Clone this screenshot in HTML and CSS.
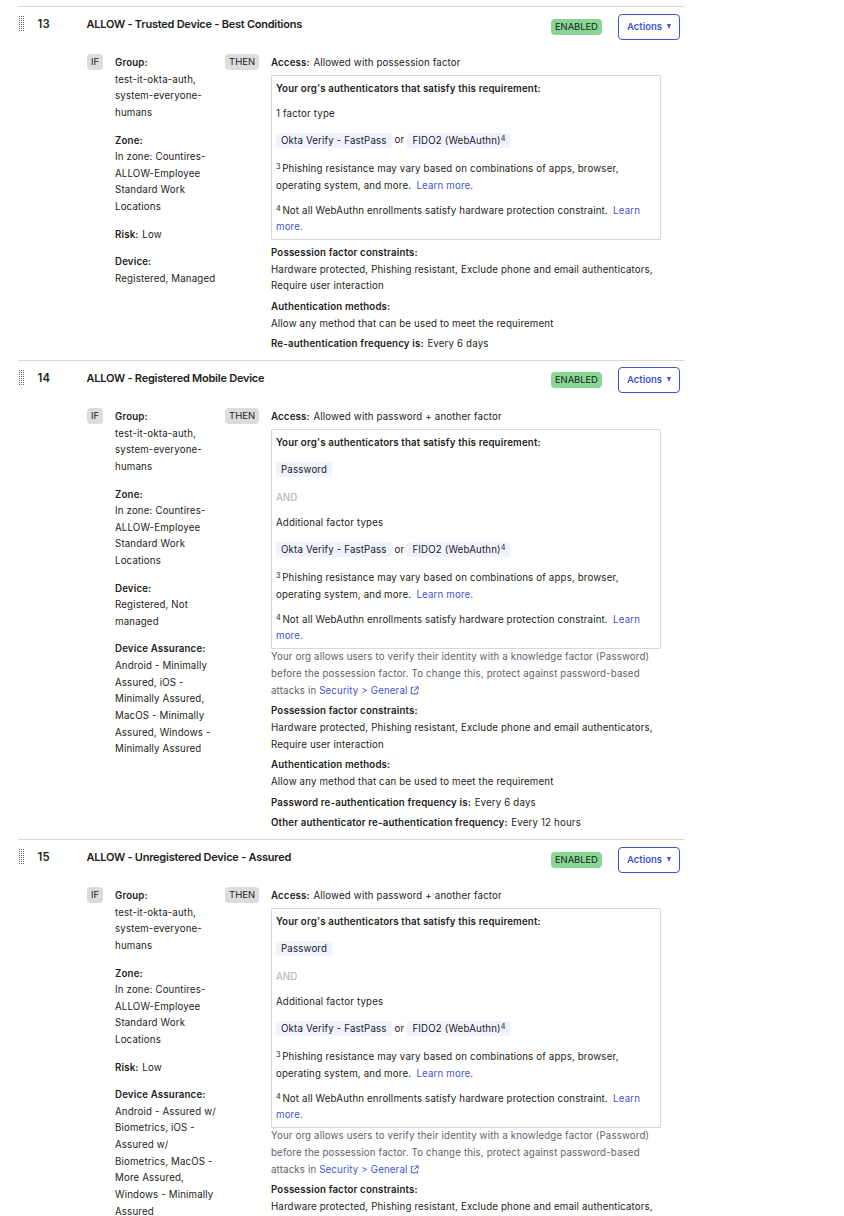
FILE: index.html
```
<!DOCTYPE html>
<html lang="en">
<head>
<meta charset="utf-8">
<title>Authentication policy rules</title>
<link rel="stylesheet" href="styles.css">
</head>
<body>
<svg class="defs" width="0" height="0">
  <symbol id="grip" viewBox="0 0 5 16"><path d="M.5 0V16M2.5 0V16M4.5 0V16" stroke="#6b6b70" stroke-width="1" stroke-dasharray="1 1" fill="none" shape-rendering="crispEdges"/></symbol>
  <symbol id="external" viewBox="0 0 10 10"><path d="M4 1.5H1.5V8.7H8.5V6M5.7 1H9V4.3M9 1L4.5 5.5" stroke="#3f55d0" stroke-width="1.1" fill="none"/></symbol>
</svg>
<main class="rules">
  <section class="rule first">
    <header class="head">
      <svg class="grip"><use href="#grip"/></svg>
      <span class="num">13</span>
      <h2 class="name">ALLOW - Trusted Device - Best Conditions</h2>
      <span class="status">ENABLED</span>
      <button class="actions">Actions <i class="caret"></i></button>
    </header>
    <div class="body">
      <div class="tag">IF</div>
      <div class="conditions">
        <p><b>Group:</b><br>test-it-okta-auth,<br>system-everyone-<br>humans</p>
        <p><b>Zone:</b><br>In zone: Countires-<br>ALLOW-Employee<br>Standard Work<br>Locations</p>
        <p><b>Risk:</b> Low</p>
        <p><b>Device:</b><br>Registered, Managed</p>
      </div>
      <div class="tag">THEN</div>
      <div class="outcome">
        <p><b>Access:</b> Allowed with possession factor</p>
        <div class="box">
          <p><b>Your org's authenticators that satisfy this requirement:</b></p>
          <p>1 factor type</p>
          <p class="chips"><span class="chip">Okta Verify - FastPass</span><span>or</span><span class="chip">FIDO2 (WebAuthn)<sup>4</sup></span></p>
          <p><sup>3</sup> Phishing resistance may vary based on combinations of apps, browser,<br>operating system, and more. <a>Learn more.</a></p>
          <p><sup>4</sup> Not all WebAuthn enrollments satisfy hardware protection constraint. <a>Learn<br>more.</a></p>
        </div>
        <p><b>Possession factor constraints:</b><br>Hardware protected, Phishing resistant, Exclude phone and email authenticators,<br>Require user interaction</p>
        <p><b>Authentication methods:</b><br>Allow any method that can be used to meet the requirement</p>
        <p><b>Re-authentication frequency is:</b> Every 6 days</p>
      </div>
    </div>
  </section>
  <section class="rule second">
    <header class="head">
      <svg class="grip"><use href="#grip"/></svg>
      <span class="num">14</span>
      <h2 class="name">ALLOW - Registered Mobile Device</h2>
      <span class="status">ENABLED</span>
      <button class="actions">Actions <i class="caret"></i></button>
    </header>
    <div class="body">
      <div class="tag">IF</div>
      <div class="conditions">
        <p><b>Group:</b><br>test-it-okta-auth,<br>system-everyone-<br>humans</p>
        <p><b>Zone:</b><br>In zone: Countires-<br>ALLOW-Employee<br>Standard Work<br>Locations</p>
        <p><b>Device:</b><br>Registered, Not<br>managed</p>
        <p><b>Device Assurance:</b><br>Android - Minimally<br>Assured, iOS -<br>Minimally Assured,<br>MacOS - Minimally<br>Assured, Windows -<br>Minimally Assured</p>
      </div>
      <div class="tag">THEN</div>
      <div class="outcome">
        <p><b>Access:</b> Allowed with password + another factor</p>
        <div class="box long">
          <p><b>Your org's authenticators that satisfy this requirement:</b></p>
          <p class="chips"><span class="chip">Password</span></p>
          <p class="and">AND</p>
          <p>Additional factor types</p>
          <p class="chips"><span class="chip">Okta Verify - FastPass</span><span>or</span><span class="chip">FIDO2 (WebAuthn)<sup>4</sup></span></p>
          <p><sup>3</sup> Phishing resistance may vary based on combinations of apps, browser,<br>operating system, and more. <a>Learn more.</a></p>
          <p><sup>4</sup> Not all WebAuthn enrollments satisfy hardware protection constraint. <a>Learn<br>more.</a></p>
        </div>
        <p class="hint">Your org allows users to verify their identity with a knowledge factor (Password)<br>before the possession factor. To change this, protect against password-based<br>attacks in <a class="tight">Security &gt; General <svg class="ext"><use href="#external"/></svg></a></p>
        <p><b>Possession factor constraints:</b><br>Hardware protected, Phishing resistant, Exclude phone and email authenticators,<br>Require user interaction</p>
        <p><b>Authentication methods:</b><br>Allow any method that can be used to meet the requirement</p>
        <p><b>Password re-authentication frequency is:</b> Every 6 days</p>
        <p><b>Other authenticator re-authentication frequency:</b> Every 12 hours</p>
      </div>
    </div>
  </section>
  <section class="rule">
    <header class="head">
      <svg class="grip"><use href="#grip"/></svg>
      <span class="num">15</span>
      <h2 class="name">ALLOW - Unregistered Device - Assured</h2>
      <span class="status">ENABLED</span>
      <button class="actions">Actions <i class="caret"></i></button>
    </header>
    <div class="body">
      <div class="tag">IF</div>
      <div class="conditions">
        <p><b>Group:</b><br>test-it-okta-auth,<br>system-everyone-<br>humans</p>
        <p><b>Zone:</b><br>In zone: Countires-<br>ALLOW-Employee<br>Standard Work<br>Locations</p>
        <p><b>Risk:</b> Low</p>
        <p><b>Device Assurance:</b><br>Android - Assured w/<br>Biometrics, iOS -<br>Assured w/<br>Biometrics, MacOS -<br>More Assured,<br>Windows - Minimally<br>Assured</p>
      </div>
      <div class="tag">THEN</div>
      <div class="outcome">
        <p><b>Access:</b> Allowed with password + another factor</p>
        <div class="box long">
          <p><b>Your org's authenticators that satisfy this requirement:</b></p>
          <p class="chips"><span class="chip">Password</span></p>
          <p class="and">AND</p>
          <p>Additional factor types</p>
          <p class="chips"><span class="chip">Okta Verify - FastPass</span><span>or</span><span class="chip">FIDO2 (WebAuthn)<sup>4</sup></span></p>
          <p><sup>3</sup> Phishing resistance may vary based on combinations of apps, browser,<br>operating system, and more. <a>Learn more.</a></p>
          <p><sup>4</sup> Not all WebAuthn enrollments satisfy hardware protection constraint. <a>Learn<br>more.</a></p>
        </div>
        <p class="hint">Your org allows users to verify their identity with a knowledge factor (Password)<br>before the possession factor. To change this, protect against password-based<br>attacks in <a class="tight">Security &gt; General <svg class="ext"><use href="#external"/></svg></a></p>
        <p><b>Possession factor constraints:</b><br>Hardware protected, Phishing resistant, Exclude phone and email authenticators,</p>
      </div>
    </div>
  </section>
</main>
</body>
</html>
```
FILE: styles.css
```
* { box-sizing: border-box; }
html, body { height: 1216px; overflow: hidden; }
body {
  margin: 0;
  background: #fff;
  color: #1d1d21;
  font: 9.7px/16.65px Inter, "Liberation Sans", sans-serif;
  letter-spacing: 0.16px;
}
p, h2 { margin: 0; }
b { font-weight: 600; margin-right: 0.8px; }
.defs { position: absolute; }
.rules { width: 666px; margin-left: 18px; padding-top: 6px; white-space: nowrap; }
.rule { border-top: 1px solid #d8d8dc; }
.rule.first { height: 354px; }
.rule.second { height: 479px; }
.head {
  display: grid;
  grid-template-columns: 19.5px 49px 464.5px 67px 62px;
  height: 47px;
  padding-top: 7px;
  align-items: start;
}
.grip { width: 5px; height: 16px; margin: 2px 0 0 1px; }
.num { font-size: 11.3px; font-weight: 600; line-height: 20px; letter-spacing: 0.3px; }
.name { font-size: 11px; font-weight: 600; line-height: 20px; letter-spacing: -0.24px; }
.status, .tag {
  justify-self: start;
  height: 16px;
  line-height: 16px;
  border-radius: 4px;
  padding: 0 4px;
  font-size: 9.5px;
  letter-spacing: 0;
}
.status { margin-top: 5px; background: #88d694; letter-spacing: -0.1px; }
.actions {
  display: flex;
  align-items: center;
  justify-content: space-between;
  width: 62px;
  height: 26px;
  padding: 0 8px 2px;
  border: 1px solid #3f55d0;
  border-radius: 4px;
  background: #fff;
  color: #3f55d0;
  font: 600 9.5px Inter, sans-serif;
}
.second .status { margin-top: 4px; }
.second .actions { margin-top: -1px; }
.caret { border: 2.5px solid transparent; border-top: 5px solid #3f55d0; border-bottom: 0; }
.body {
  display: grid;
  grid-template-columns: 28px 110px 46px 390px;
  margin-left: 69px;
  align-items: start;
}
.tag { background: #dcdcdc; }
.conditions { display: grid; gap: 10.8px; padding-top: 1.1px; }
.outcome { display: grid; gap: 4.05px; padding-top: 1px; }
.box {
  display: grid;
  gap: 8.25px;
  width: 390px;
  margin: -1px 0 1px;
  padding: 5.2px 4px 3px;
  border: 1px solid #d8d8dc;
  border-radius: 1px;
}
.box.long { padding-bottom: 2.6px; margin-bottom: 0.7px; }
.chips { display: flex; gap: 3px; align-items: center; height: 22px; margin: -1px 0 1px; }
.chip { height: 15px; line-height: 15px; padding: 0 5px; background: #f0f2ff; border-radius: 1px; }
.chip sup { margin-right: 0; }
sup { font-size: 7.3px; line-height: 0; vertical-align: 3px; letter-spacing: 0; margin-right: -1.2px; }
.and { color: #b9b9be; font-weight: 500; letter-spacing: 0; }
.hint { color: #62626a; margin-top: -4px; letter-spacing: 0.15px; }
a { color: #3f55d0; margin-left: 2.4px; }
.tight { margin-left: 0; }
.ext { width: 9px; height: 9px; vertical-align: -1px; }
```
